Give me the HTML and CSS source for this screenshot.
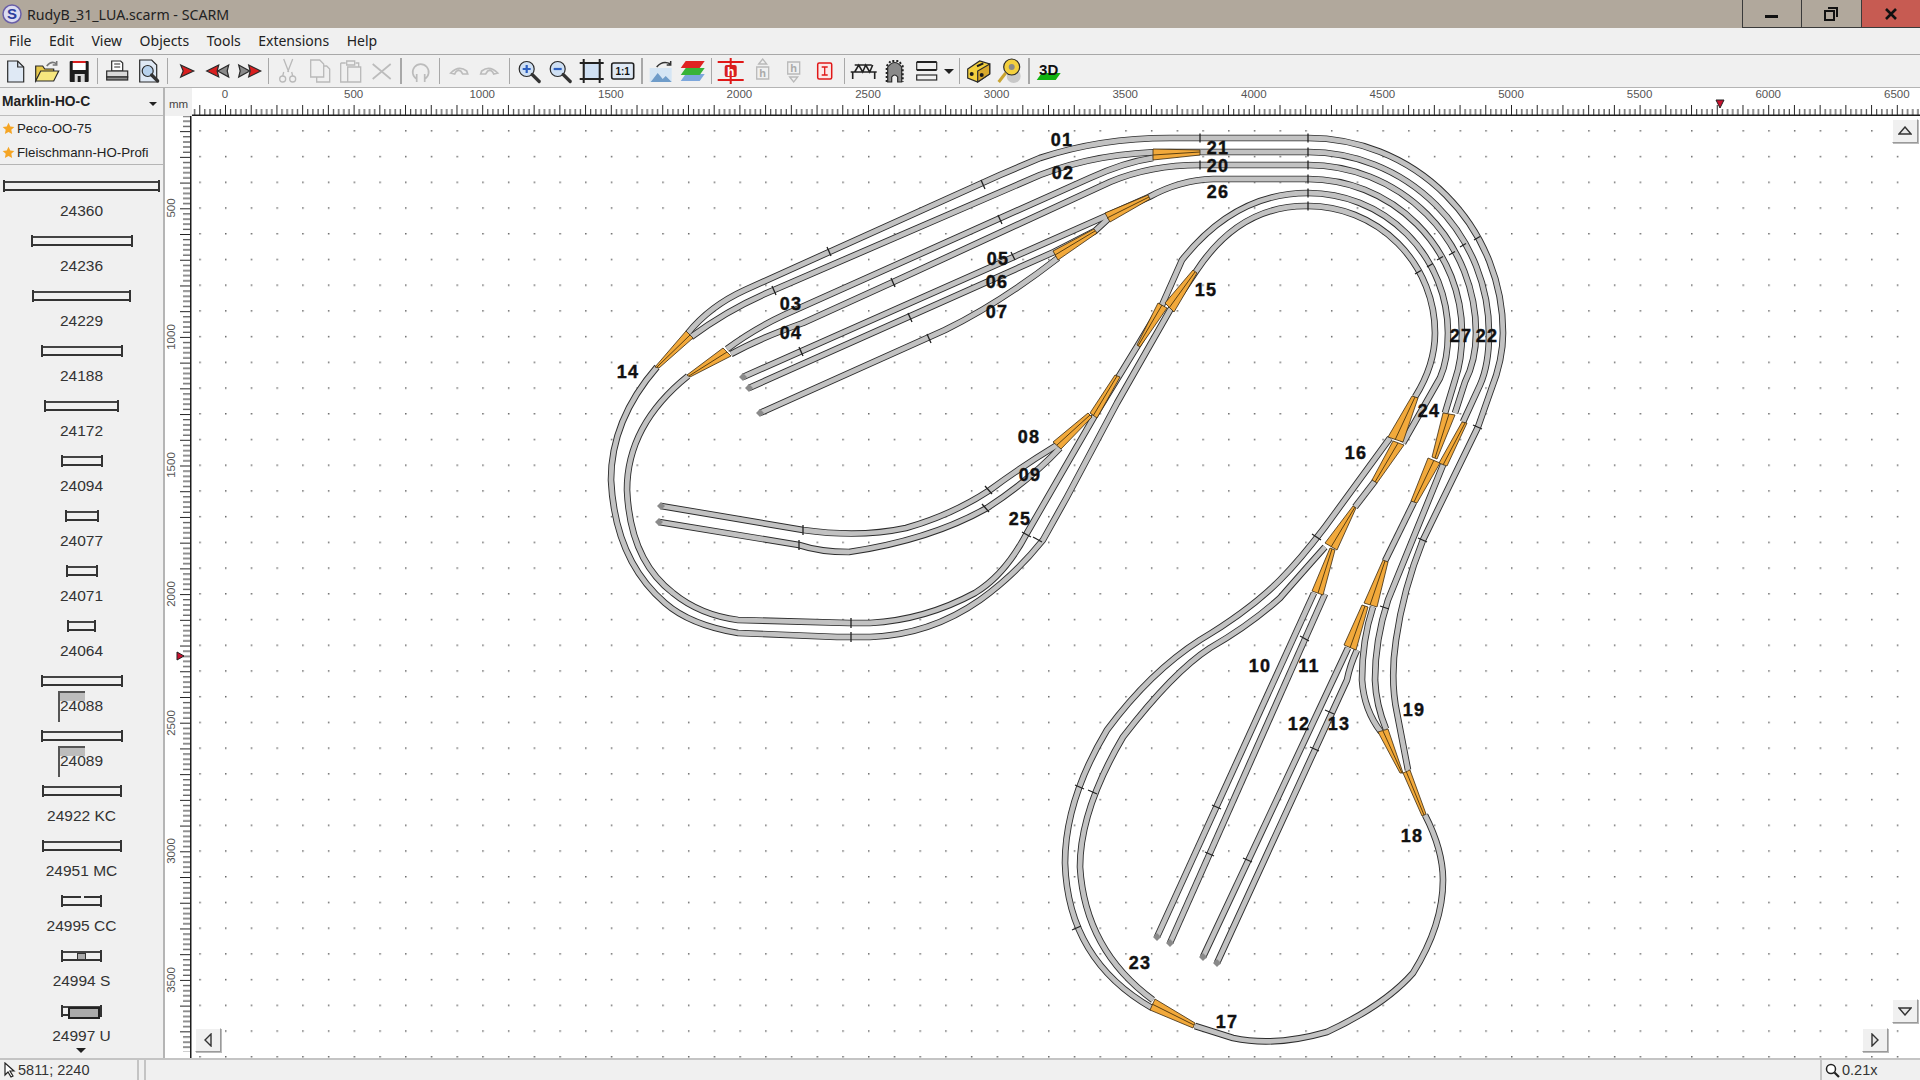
FILE: index.html
```html
<!DOCTYPE html>
<html lang="en">
<head>
<meta charset="utf-8">
<title>RudyB_31_LUA.scarm - SCARM</title>
<link rel="stylesheet" href="styles.css">
</head>
<body>
<div class="app">
  <header class="titlebar">
    <svg class="appicon" viewBox="0 0 20 20"><circle cx="10" cy="10" r="9" class="appicon-bg"/><text x="10" y="15" class="appicon-s">S</text></svg>
    <span class="title">RudyB_31_LUA.scarm - SCARM</span>
    <div class="winbtns">
      <div class="winbtn"><span class="w-min"></span></div>
      <div class="winbtn"><svg width="14" height="14" viewBox="0 0 14 14"><path class="w-res" d="M4 1h9v9M1 4h9v9H1z"/></svg></div>
      <div class="winbtn close"><svg width="14" height="12" viewBox="0 0 14 12"><path class="w-x" d="M2 1l10 10M12 1L2 11"/></svg></div>
    </div>
  </header>
  <nav class="menubar">
    <span>File</span><span>Edit</span><span>View</span><span>Objects</span><span>Tools</span><span>Extensions</span><span>Help</span>
  </nav>
  <div class="toolbar">
    <svg class="ic" viewBox="0 0 26 26"><path class="k pale" d="M5 3h10l6 6v15H5z"/><path class="k none" d="M15 3v6h6"/></svg>
    <svg class="ic" viewBox="0 0 26 26"><path class="k yel" d="M2 23V8h7l2 3h9v3H7z"/><path class="k yel2" d="M2 23l5-10h18l-5 10z"/><path class="garrow" d="M13 8q5-6 10-2m0-3v4h-4"/></svg>
    <svg class="ic" viewBox="0 0 26 26"><rect class="black" x="4" y="3" width="19" height="21" rx="1"/><rect class="redf" x="7" y="3" width="13" height="2"/><rect class="whitef" x="7" y="5" width="13" height="7"/><rect class="lgray" x="9" y="16" width="10" height="8"/><rect class="black" x="12" y="18" width="3" height="6"/></svg>
    <i class="sep"></i>
    <svg class="ic" viewBox="0 0 26 26"><path class="k whitef" d="M8 3h9l2 2v8H8z"/><path class="k none" d="M10.500 6h6M10.500 9h6"/><rect class="k lgray" x="3" y="13" width="21" height="6"/><rect class="k g5" x="3" y="19" width="21" height="3"/></svg>
    <svg class="ic" viewBox="0 0 26 26"><path class="k pale" d="M4 2h12l5 5v17H4z"/><circle class="k lblue" cx="12" cy="13" r="5.500"/><path class="thick" d="M16 17l6 6"/></svg>
    <i class="sep"></i>
    <svg class="ic" viewBox="0 0 26 26"><path class="k redf" d="M7 7l13 6-13 6 2.500-6z"/></svg>
    <svg class="ic" viewBox="0 0 26 26"><path class="k redf" d="M14 7L2 13l12 6-1.500-6z"/><path class="k g5" d="M24 7l-11 6 11 6-1.500-6z"/></svg>
    <svg class="ic" viewBox="0 0 26 26"><path class="k g5" d="M2 7l11 6-11 6 1.500-6z"/><path class="k redf" d="M12 7l12 6-12 6 1.500-6z"/></svg>
    <i class="sep"></i>
    <svg class="ic" viewBox="0 0 26 26"><path class="d" d="M9 1l5 13M18 1l-5 13M9 14l-1 4M17 14l1 4"/><circle class="d" cx="8" cy="21" r="3"/><circle class="d" cx="18" cy="21" r="3"/></svg>
    <svg class="ic" viewBox="0 0 26 26"><path class="d" d="M4 2h9l4 4v13H4zM17 8h3l3 3v13H10v-5"/></svg>
    <svg class="ic" viewBox="0 0 26 26"><path class="d" d="M3 5h5M18 5h3v4M3 5v19h7M10 9h13v15H10zM9 3h8v4H9z"/></svg>
    <svg class="ic" viewBox="0 0 26 26"><path class="d2" d="M4 6l18 15M22 6L4 21"/></svg>
    <i class="sep"></i>
    <svg class="ic" viewBox="0 0 26 26"><path class="d2" d="M9 21a8 8 0 1 1 8 0M9 16v8M17 16v8"/></svg>
    <i class="sep"></i>
    <svg class="ic" viewBox="0 0 26 26"><path class="d2" d="M5 15q8-8 16-2l1 3h-5l-2-3q-4-2-6 3z"/></svg>
    <svg class="ic" viewBox="0 0 26 26"><path class="d2" d="M21 15q-8-8-16-2l-1 3h5l2-3q4-2 6 3z"/></svg>
    <i class="sep"></i>
    <svg class="ic" viewBox="0 0 26 26"><circle class="k lblue2" cx="11" cy="11" r="7.500"/><path class="plus" d="M7 11h8M11 7v8"/><path class="thick" d="M16.500 16.500l7 7"/></svg>
    <svg class="ic" viewBox="0 0 26 26"><circle class="k lblue2" cx="11" cy="11" r="7.500"/><path class="plus" d="M7 11h8"/><path class="thick" d="M16.500 16.500l7 7"/></svg>
    <svg class="ic" viewBox="0 0 26 26"><rect class="k lblue2" x="5" y="5" width="16" height="16"/><path class="thick2" d="M5 1v24M21 1v24M1 5h24M1 21h24"/></svg>
    <svg class="ic" viewBox="0 0 26 26"><rect class="k2 pale" x="2" y="5" width="22" height="16" rx="2"/><text x="13" y="17" class="oneone">1:1</text></svg>
    <i class="sep"></i>
    <svg class="ic" viewBox="0 0 26 26"><rect class="lblue3" x="2" y="10" width="22" height="14"/><path class="blue" d="M3 24l7-9 5 6 3-3 6 6z"/><path class="garrow2" d="M9 9q6-7 14-3m0-3v4h-4"/></svg>
    <svg class="ic" viewBox="0 0 26 26"><path class="lay3" d="M6 16h19l-5 7H1z"/><path class="lay2" d="M6 10h19l-5 7H1z"/><path class="lay1" d="M6 3h19l-5 7H1z"/></svg>
    <i class="sep"></i>
    <svg class="ic" viewBox="0 0 26 26"><path class="rl" d="M0 4h26M0 22h26M13 0v26"/><rect class="redf" x="7" y="7" width="12" height="12" rx="2"/><text x="13" y="17.500" class="hw">h</text></svg>
    <svg class="ic" viewBox="0 0 26 26"><path class="d" d="M9 6l4-5 4 5zM7 9h12v12H7z"/><text x="13" y="19" class="hg">h</text></svg>
    <svg class="ic" viewBox="0 0 26 26"><path class="d" d="M7 4h12v12H7zM9 19l4 5 4-5z"/><text x="13" y="14" class="hg">h</text></svg>
    <svg class="ic" viewBox="0 0 26 26"><rect class="rbox" x="6" y="5" width="14" height="16" rx="1.500"/><path class="rl thin" d="M10 9h6M13 9v8M10 17h6"/></svg>
    <i class="sep"></i>
    <svg class="ic" viewBox="0 0 26 26"><path class="k2 none" d="M0 14h26M2 14v7M24 14v7M4 14l4-7 4 7 3-7 4 7 3-7M4 7h17"/></svg>
    <svg class="ic" viewBox="0 0 26 26"><path class="g5 k" d="M6 24V9q7-9 14 0v15h-4v-5q-3-4-6 0v5z"/><path class="dots" d="M5 24V8l4-5h8l4 5v16"/></svg>
    <svg class="ic" viewBox="0 0 26 26"><path class="thick2" d="M3 4h20M3 12h20"/><rect class="k none" x="3" y="17" width="20" height="5"/><path class="k none" d="M3 4v8M23 4v8"/></svg>
    <i class="ddarrow"></i>
    <i class="sep"></i>
    <svg class="ic" viewBox="0 0 26 26"><path class="k yel3" d="M2 11l12-8 10 3v10L12 24 2 20z"/><path class="k yel4" d="M12 13v11l12-8V6z"/><rect class="black" x="11" y="6" width="7" height="2" transform="rotate(-25 14 7)"/><circle class="black" cx="6" cy="16" r="2"/><circle class="black" cx="16" cy="17" r="2"/></svg>
    <svg class="ic" viewBox="0 0 26 26"><circle class="tapeshadow" cx="17" cy="18" r="7"/><circle class="k yel3" cx="15" cy="9" r="8"/><circle class="g5" cx="15" cy="9" r="3"/><path class="tape" d="M9 15L2 24"/></svg>
    <i class="sep"></i>
    <svg class="ic" viewBox="0 0 26 26"><path class="green" d="M6 15h19l-5 7H1z"/><text x="13" y="17" class="threed">3D</text></svg>
  </div>

  <main class="main">
    <aside class="panel">
      <div class="combo"><b>Marklin-HO-C</b><i class="ddarrow small"></i></div>
      <div class="fav"><svg class="star" viewBox="0 0 20 20"><path d="M10 1l2.700 6 6.300.7-4.700 4.300 1.300 6.500L10 15.300 4.400 18.500 5.700 12 1 7.700 7.300 7z"/></svg>Peco-OO-75</div>
      <div class="fav last"><svg class="star" viewBox="0 0 20 20"><path d="M10 1l2.700 6 6.300.7-4.700 4.300 1.300 6.500L10 15.300 4.400 18.500 5.700 12 1 7.700 7.300 7z"/></svg>Fleischmann-HO-Profi</div>
      <div class="list">
        <div class="item"><div class="sym" style="width:157px"></div><span>24360</span></div>
        <div class="item"><div class="sym" style="width:102px"></div><span>24236</span></div>
        <div class="item"><div class="sym" style="width:99px"></div><span>24229</span></div>
        <div class="item"><div class="sym" style="width:82px"></div><span>24188</span></div>
        <div class="item"><div class="sym" style="width:75px"></div><span>24172</span></div>
        <div class="item"><div class="sym" style="width:42px"></div><span>24094</span></div>
        <div class="item"><div class="sym" style="width:34px"></div><span>24077</span></div>
        <div class="item"><div class="sym" style="width:32px"></div><span>24071</span></div>
        <div class="item"><div class="sym" style="width:29px"></div><span>24064</span></div>
        <div class="item tapered"><div class="sym" style="width:82px"></div><span>24088</span></div>
        <div class="item tapered"><div class="sym" style="width:82px"></div><span>24089</span></div>
        <div class="item"><div class="sym" style="width:80px"></div><span>24922 KC</span></div>
        <div class="item"><div class="sym" style="width:80px"></div><span>24951 MC</span></div>
        <div class="item"><div class="sym gap" style="width:41px"></div><span>24995 CC</span></div>
        <div class="item"><div class="sym box" style="width:41px"></div><span>24994 S</span></div>
        <div class="item"><div class="sym ubox" style="width:41px"></div><span>24997 U</span></div>
      </div>
      <i class="more"></i>
    </aside>

    <section class="work">
      <div class="corner">mm</div>
      <svg class="hruler" viewBox="192 88 1728 28">
        <defs>
          <pattern id="hticks" patternUnits="userSpaceOnUse" x="225" y="88" width="25.72" height="28">
            <path class="tick" d="M.5 17v10M5.640 21v6M10.790 21v6M15.930 21v6M21.080 21v6"/>
          </pattern>
        </defs>
        <rect x="192" y="88" width="1728" height="28" fill="url(#hticks)"/>
        <rect class="black" x="192" y="114.500" width="1728" height="1.500"/>
        <g class="rtext">
          <text x="225" y="98">0</text><text x="353.600" y="98">500</text><text x="482.200" y="98">1000</text><text x="610.800" y="98">1500</text><text x="739.400" y="98">2000</text><text x="868" y="98">2500</text><text x="996.600" y="98">3000</text><text x="1125.200" y="98">3500</text><text x="1253.800" y="98">4000</text><text x="1382.400" y="98">4500</text><text x="1511" y="98">5000</text><text x="1639.600" y="98">5500</text><text x="1768.200" y="98">6000</text><text x="1896.800" y="98">6500</text>
        </g>
        <path class="marker" d="M1716 100h8l-4 8z"/>
      </svg>
      <svg class="vruler" viewBox="165 116 27 942">
        <defs>
          <pattern id="vticks" patternUnits="userSpaceOnUse" x="165" y="79.700" width="27" height="25.720">
            <path class="tick" d="M15 .5h10M18 5.640h7M18 10.790h7M18 15.930h7M18 21.080h7"/>
          </pattern>
        </defs>
        <rect x="165" y="116" width="27" height="936" fill="url(#vticks)"/>
        <rect class="black" x="190" y="116" width="1.500" height="942"/>
        <g class="rtext">
          <text transform="translate(175 208) rotate(-90)">500</text><text transform="translate(175 337) rotate(-90)">1000</text><text transform="translate(175 465) rotate(-90)">1500</text><text transform="translate(175 594) rotate(-90)">2000</text><text transform="translate(175 723) rotate(-90)">2500</text><text transform="translate(175 851) rotate(-90)">3000</text><text transform="translate(175 980) rotate(-90)">3500</text>
        </g>
        <path class="marker" d="M177 652v8l7-4z"/>
      </svg>
      <div class="canvas">
        <svg class="plan" viewBox="192 116 1728 942">
          <defs>
            <pattern id="dots" patternUnits="userSpaceOnUse" x="19.240" y="1.500" width="25.720" height="25.720">
              <rect class="griddot" x="0" y="0" width="1.500" height="1.500"/>
            </pattern>
            <g id="tracks">
              <path d="M1308 138A195 195 0 0 1 1503 333Q1503 360 1491 390L1478 427 1423 540Q1403 590 1396 640 1390 680 1397 713L1408 770"/>
              <path d="M1308 152A181 181 0 0 1 1489 333Q1489 365 1480 385L1463 422"/>
              <path d="M1308 165A168 168 0 0 1 1476 333Q1476 360 1465 382L1455 413"/>
              <path d="M1308 179A154 154 0 0 1 1462 333Q1462 360 1455 380L1445 413"/>
              <path d="M1308 193A140 140 0 0 1 1448 333Q1448 360 1440 378L1403 443"/>
              <path d="M1308 206A127 127 0 0 1 1435 333Q1435 365 1415 397"/>
              <path d="M1308 138H1170Q1100 138 1040 158L1000 175 745 290Q710 306 688 333"/>
              <path d="M1308 152H1170Q1100 152 1040 175L774 290Q730 308 691 337"/>
              <path d="M1153 158Q1125 162 1090 178L784 315Q752 330 727 349"/>
              <path d="M1308 165H1200Q1150 165 1110 182L891 283 803 323Q760 338 731 354"/>
              <path d="M1308 179H1213Q1180 180 1149 197L743 377"/>
              <path d="M1108 219L1095 231 1054 252 749 388"/>
              <path d="M1058 258Q1000 303 945 330L760 413"/>
              <path d="M657 367Q611 420 611 480 615 560 665 603 690 625 738 633L837 637H870Q930 635 980 600 1015 575 1043 540L1067 497 1117 403 1170 310 1197 270Q1240 205 1308 206"/>
              <path d="M688 376Q627 425 627 490 630 560 673 593 700 615 738 620L849 623H870Q925 620 975 593 1005 575 1027 533L1094 417 1138 345 1162 305 1182 260Q1235 193 1308 193"/>
              <path d="M1057 445Q1021 467 990 490 952 515 906 528 860 538 803 530L661 506"/>
              <path d="M1060 448Q1030 480 987 508 930 540 849 552 820 552 799 545L659 522"/>
              <path d="M1390 438L1325 527Q1300 560 1280 580 1250 610 1200 640 1150 672 1107 730 1065 800 1065 863 1068 960 1152 1008"/>
              <path d="M1355 507L1375 481"/>
              <path d="M1325 547Q1300 575 1280 598 1250 625 1210 648 1173 672 1123 737 1080 810 1080 867 1085 950 1153 1000"/>
              <path d="M1314 593L1157 937"/>
              <path d="M1325 594L1170 943"/>
              <path d="M1348 648L1203 957"/>
              <path d="M1357 650Q1350 665 1347 680L1217 963"/>
              <path d="M1385 561L1414 502"/>
              <path d="M1373 607Q1362 640 1362 680 1364 710 1381 732"/>
              <path d="M1443 465L1388 600Q1375 640 1375 680 1376 705 1386 729"/>
              <path d="M1425 815Q1443 850 1443 880 1443 925 1413 973 1385 1005 1327 1032 1275 1047 1233 1038L1195 1026"/>
            </g>
          </defs>
          <rect x="192" y="116" width="1728" height="942" fill="url(#dots)"/>
          <use href="#tracks" class="edge"/>
          <use href="#tracks" class="bed"/>
          <path class="joints" d="M1308 133.500v9M1308 147.500v9M1308 160.500v9M1308 174.500v9M1308 188.500v9M1308 201.500v9M1200 133.500v9M1200 160.500v9M1474 240l6-3.500M1460 247l6-3.500M1449 255l6-3.500M1437 260l6-3.500M1427 267l6-3.500M1415 274l6-3.500M981 180l4 9M998 215l4 9M827 247l4 9M891 278l4 9M772 286l4 9M799 347l4 9M908 313l4 9M927 334l4 9M851 632v10M851 618v10M803 525v10M799 540v10M985 486l7 8M982 504l7 8M1022 532l9 5M1033 537l9 5M1312 534l9 6M1473 425l9 4M1418 538l9 4M1380 606l9 3M1300 636l9 5M1075 785l9 4M1088 790l9 4M1212 805l9 4M1205 852l9 4M1310 747l9 4M1243 858l9 4M1325 710l9 4M1072 930l9-4M1011 252l4 8"/>
          <g class="wedges">
            <polygon points="1412,396 1418,398 1403,442 1388,437"/>
            <polygon points="1393,441 1404,445 1377,483 1372,480"/>
            <polygon points="1353,506 1356,508 1337,550 1325,543"/>
            <polygon points="1330,548 1335,550 1323,595 1312,591"/>
            <polygon points="1443,413 1455,415 1437,459 1432,457"/>
            <polygon points="1462,422 1467,423 1447,466 1439,463"/>
            <polygon points="1428,458 1440,463 1417,503 1411,501"/>
            <polygon points="1383,560 1388,562 1377,607 1364,603"/>
            <polygon points="1362,605 1368,607 1356,650 1344,645"/>
            <polygon points="1200,150 1200,155 1153,160 1153,149"/>
            <polygon points="1148,195 1150,199 1110,222 1105,213"/>
            <polygon points="1094,229 1097,233 1058,260 1053,251"/>
            <polygon points="1193,270 1197,273 1174,312 1165,303"/>
            <polygon points="1158,303 1167,308 1140,347 1137,345"/>
            <polygon points="686,331 693,338 659,368 655,367"/>
            <polygon points="723,348 731,356 690,377 687,375"/>
            <polygon points="1115,375 1120,377 1097,418 1090,413"/>
            <polygon points="1088,413 1092,417 1061,449 1053,442"/>
            <polygon points="1378,732 1388,729 1403,773 1400,773"/>
            <polygon points="1403,773 1410,770 1426,814 1422,816"/>
            <polygon points="1155,999 1150,1010 1193,1028 1195,1023"/>
          </g>
          <path class="wlines" d="M1415 397L1395 440M1398 443L1375 482M1355 507L1331 547M1332 549L1318 593M1449 414L1435 458M1465 423L1443 465M1434 460L1414 502M1385 561L1370 605M1365 606L1350 648M1200 152L1153 155M1149 197L1107 218M1095 231L1055 255M1195 272L1169 308M1162 305L1138 346M657 367L690 335M689 376L727 352M1117 376L1093 416M1090 415L1057 445M1383 731L1402 773M1406 771L1424 815M1194 1025L1152 1004"/>
          <path class="stubs" d="M743 377m-4 0l4-4 4 4-4 4zM749 388m-4 0l4-4 4 4-4 4zM760 413m-4 0l4-4 4 4-4 4zM661 506m-4 0l4-4 4 4-4 4zM659 522m-4 0l4-4 4 4-4 4zM1157 937m-4 0l4-4 4 4-4 4zM1170 943m-4 0l4-4 4 4-4 4zM1203 957m-4 0l4-4 4 4-4 4zM1217 963m-4 0l4-4 4 4-4 4z"/>
          <g class="lbl">
            <text x="1062" y="146">01</text><text x="1218" y="154">21</text><text x="1218" y="172">20</text><text x="1063" y="179">02</text><text x="1218" y="198">26</text>
            <text x="998" y="265">05</text><text x="997" y="288">06</text><text x="997" y="318">07</text><text x="1206" y="296">15</text>
            <text x="791" y="310">03</text><text x="791" y="339">04</text><text x="628" y="378">14</text>
            <text x="1461" y="342">27</text><text x="1487" y="342">22</text><text x="1429" y="417">24</text><text x="1356" y="459">16</text>
            <text x="1029" y="443">08</text><text x="1030" y="481">09</text><text x="1020" y="525">25</text>
            <text x="1260" y="672">10</text><text x="1309" y="672">11</text><text x="1299" y="730">12</text><text x="1339" y="730">13</text>
            <text x="1414" y="716">19</text><text x="1412" y="842">18</text><text x="1140" y="969">23</text><text x="1227" y="1028">17</text>
          </g>
        </svg>
        <div class="sbtn up"><svg width="14" height="10" viewBox="0 0 14 10"><path class="tri" d="M7 1l6 7H1z"/></svg></div>
        <div class="sbtn down"><svg width="14" height="10" viewBox="0 0 14 10"><path class="tri" d="M1 2h12L7 9z"/></svg></div>
        <div class="sbtn left"><svg width="10" height="14" viewBox="0 0 10 14"><path class="tri" d="M8 1v12L2 7z"/></svg></div>
        <div class="sbtn right"><svg width="10" height="14" viewBox="0 0 10 14"><path class="tri" d="M2 1v12l6-6z"/></svg></div>
      </div>
    </section>
  </main>

  <footer class="status">
    <div class="pane pos"><svg width="12" height="16" viewBox="0 0 12 16"><path class="cursor" d="M1 1v12l3-3 3 5 2-1-3-5h4z"/></svg>5811; 2240</div>
    <div class="pane mid"></div>
    <div class="pane zoom"><svg width="15" height="15" viewBox="0 0 15 15"><circle class="mag" cx="6" cy="6" r="4.500"/><path class="magh" d="M9.500 9.500l4.500 4.500"/></svg>0.21x</div>
  </footer>
</div>
</body>
</html>
```

FILE: styles.css
```css
* { box-sizing: border-box; }
html, body { margin: 0; padding: 0; height: 100%; overflow: hidden; }
body { font-family: "Liberation Sans", Arial, sans-serif; color: #222; background: #f0f0f0; }
.app { width: 1920px; height: 1080px; display: flex; flex-direction: column; }

/* Title bar */
.titlebar { height: 28px; flex: none; display: flex; align-items: center; background: #b1a89c; padding-left: 2px; }
.appicon { width: 20px; height: 20px; flex: none; }
.appicon-bg { fill: #dcdcf0; stroke: #6a5fa8; stroke-width: 1.5; }
.appicon-s { font: bold 15px "Liberation Sans", sans-serif; fill: #2d3f9e; text-anchor: middle; }
.title { margin-left: 5px; font: 14.2px "Noto Sans", sans-serif; color: #222; white-space: nowrap; }
.winbtns { margin-left: auto; display: flex; height: 28px; }
.winbtn { width: 59.500px; height: 28px; display: flex; align-items: center; justify-content: center; border-left: 1px solid #3a3a3a; border-bottom: 1px solid #3a3a3a; }
.winbtn.close { background: #c75b52; }
.w-min { width: 13px; height: 3px; background: #111; margin-top: 6px; }
.w-res { fill: none; stroke: #111; stroke-width: 2; }
.w-x { fill: none; stroke: #111; stroke-width: 2.6; }

/* Menu */
.menubar { height: 27px; flex: none; display: flex; align-items: center; gap: 17.500px; padding: 0 0 1px 9px; background: #f0f0f0; border-bottom: 1px solid #a8a8a8; font: 14px "Noto Sans", sans-serif; color: #222; }

/* Toolbar */
.toolbar { height: 33px; flex: none; display: flex; align-items: center; background: #f0f0f0; border-bottom: 1px solid #b4b4b4; }
.ic { width: 31.400px; height: 26px; flex: none; }
.sep { width: 7px; height: 26px; flex: none; position: relative; display: block; }
.sep::before { content: ""; display: block; width: 1.500px; height: 26px; margin: 0 auto; background: #a8a8a8; }
.ddarrow { width: 14px; flex: none; height: 0; display: block; position: relative; }
.ddarrow::before { content: ""; position: absolute; left: 2px; top: -2px; border: 5px solid transparent; border-top-color: #222; border-bottom: 0; }
.k { stroke: #2a2a2a; stroke-width: 1.200; }
.k2 { stroke: #222; stroke-width: 1.600; }
.none { fill: none; }
.pale { fill: #dfe9f5; }
.yel { fill: #e8c94a; }
.yel2 { fill: #f6e67e; }
.yel3 { fill: #f3d03e; }
.yel4 { fill: #d9a92c; }
.black { fill: #1c1c1c; }
.redf { fill: #d91f1f; }
.whitef { fill: #fff; }
.lgray { fill: #d8d8d8; }
.g5 { fill: #8a8a8a; }
.lblue { fill: #b7d2ee; }
.lblue2 { fill: #cfe0f4; }
.lblue3 { fill: #d5e5f4; }
.blue { fill: #6f9cc9; }
.green { fill: #12b312; }
.garrow { fill: none; stroke: #777; stroke-width: 1.600; }
.garrow2 { fill: none; stroke: #333; stroke-width: 1.500; }
.thick { fill: none; stroke: #333; stroke-width: 3.200; stroke-linecap: round; }
.thick2 { fill: none; stroke: #222; stroke-width: 2; }
.plus { fill: none; stroke: #2d5fc0; stroke-width: 2.200; }
.d { fill: none; stroke: #b9b9b9; stroke-width: 1.300; }
.d2 { fill: none; stroke: #bcbcbc; stroke-width: 1.700; }
.oneone { font: bold 10px "Liberation Sans", sans-serif; fill: #111; text-anchor: middle; }
.lay1 { fill: #e02222; }
.lay2 { fill: #37b337; }
.lay3 { fill: #7da7dc; }
.rl { fill: none; stroke: #e01818; stroke-width: 2; }
.rl.thin { stroke-width: 1.300; }
.rbox { fill: #fbe9e9; stroke: #e01818; stroke-width: 1.500; }
.hw { font: bold 12px "Liberation Sans", sans-serif; fill: #fff; text-anchor: middle; }
.hg { font: bold 11px "Liberation Sans", sans-serif; fill: #aaa; text-anchor: middle; }
.dots { fill: none; stroke: #222; stroke-width: 2; stroke-dasharray: 2 2; }
.tape { fill: none; stroke: #c9a431; stroke-width: 3; }
.tapeshadow { fill: #c8c8c8; }
.threed { font: bold 15px "Liberation Sans", sans-serif; fill: #111; text-anchor: middle; }

/* Main split */
.main { flex: 1; min-height: 0; display: flex; }

/* Left panel */
.panel { width: 165px; flex: none; display: flex; flex-direction: column; overflow: hidden; background: #f0f0f0; border-right: 2px solid #b5b5b5; }
.combo { height: 28px; flex: none; display: flex; align-items: center; padding-left: 2px; font-size: 13.800px; color: #222; border-bottom: 1px solid #bcbcbc; }
.combo b { flex: 1; }
.ddarrow.small { width: 14px; }
.ddarrow.small::before { left: 0; top: 0; border-width: 4px; border-bottom: 0; }
.fav { height: 25px; flex: none; display: flex; align-items: center; gap: 2px; padding-left: 2px; font-size: 13.300px; color: #222; white-space: nowrap; }
.fav.last { border-bottom: 1px solid #b5b5b5; height: 24px; }
.star { width: 13px; height: 13px; flex: none; fill: #f5a524; }
.list { flex: none; }
.item { height: 55px; position: relative; display: flex; flex-direction: column; align-items: center; padding-top: 15px; }
.item span { margin-top: 10px; font-size: 15.500px; line-height: 18px; color: #333; white-space: nowrap; position: relative; }
.sym { height: 12px; flex: none; position: relative; border-left: 2px solid #333; border-right: 2px solid #333;
  background: linear-gradient(#444, #444) 0 1px / 100% 2px no-repeat, linear-gradient(#333, #333) 0 9px / 100% 2px no-repeat; }
.tapered .sym::after { content: ""; position: absolute; left: 15px; top: 16px; width: 25px; height: 29px; border-left: 2px solid #555; border-top: 2px solid #555;
  background: linear-gradient(#bdbdbd, #bdbdbd) 0 0 / 100% 8px no-repeat; }
.sym.gap { background: linear-gradient(to right, #333 0 48%, transparent 48% 58%, #333 58%) 0 1px / 100% 2px no-repeat, linear-gradient(#333, #333) 0 9px / 100% 2px no-repeat; }
.sym.box::after { content: ""; position: absolute; left: 14px; top: 3px; width: 7px; height: 5px; border: 1.500px solid #333; background: #aaa; }
.sym.ubox::after { content: ""; position: absolute; left: 5px; top: 2px; width: 28px; height: 8px; border: 2px solid #222; background: #aaa; }
.more { display: block; width: 0; height: 0; margin: 3px 0 0 76px; border: 5px solid transparent; border-top-color: #222; border-bottom: 0; }

/* Work area with rulers */
.work { flex: 1; min-width: 0; display: grid; grid-template-columns: 27px 1fr; grid-template-rows: 28px 1fr; }
.corner { display: flex; align-items: center; justify-content: center; font-size: 11.500px; color: #444; padding-top: 4px; background: #f0f0f0; }
.hruler { width: 1728px; height: 28px; display: block; background: #fff; }
.vruler { width: 27px; height: 942px; display: block; background: #fff; }
.tick { fill: none; stroke: #222; stroke-width: 1; }
.rtext { font: 11.500px "Liberation Sans", sans-serif; fill: #555; text-anchor: middle; }
.marker { fill: #c8102e; stroke: #222; stroke-width: 1; }
.canvas { position: relative; background: #fff; overflow: hidden; }
.plan { width: 1728px; height: 942px; display: block; }
.griddot { fill: #666; }
.edge { fill: none; stroke: #2c2c2c; stroke-width: 6.600; stroke-linejoin: round; }
.bed { fill: none; stroke: #c2c2c2; stroke-width: 4.800; stroke-linejoin: round; }
.joints { fill: none; stroke: #222; stroke-width: 1.300; }
.wedges polygon { fill: #f2a93b; stroke: #3a2a10; stroke-width: .8; }
.wlines { fill: none; stroke: #5b3f10; stroke-width: 1; }
.stubs { fill: #8a8a8a; }
.lbl { font: bold 18px "Liberation Sans", sans-serif; letter-spacing: 1.300px; fill: #111; stroke: #111; stroke-width: .4; text-anchor: middle; }

/* Scroll buttons over the canvas */
.sbtn { position: absolute; width: 26px; height: 24px; display: flex; align-items: center; justify-content: center; background: #f0f0f0; border: 1px solid; border-color: #fff #9a9a9a #9a9a9a #fff; box-shadow: 1px 1px 0 #bbb; }
.sbtn.up { right: 2px; top: 3px; }
.sbtn.down { right: 2px; bottom: 35px; }
.sbtn.left { left: 3px; bottom: 6px; }
.sbtn.right { right: 32px; bottom: 6px; }
.tri { fill: #e6e6e6; stroke: #333; stroke-width: 1.400; }

/* Status bar */
.status { height: 22px; flex: none; display: flex; gap: 5px; align-items: stretch; background: #f0f0f0; border-top: 2px solid #c4c4c4; font-size: 14.500px; color: #333; }
.pane { display: flex; align-items: center; gap: 2px; border-left: 2px solid #c4c4c4; }
.pos { width: 139px; border-left: 0; padding-left: 4px; border-right: 2px solid #c4c4c4; }
.mid { flex: 1; }
.zoom { width: 100px; padding-left: 3px; gap: 2px; }
.cursor { fill: #fff; stroke: #222; stroke-width: 1.200; }
.mag { fill: #fff; stroke: #222; stroke-width: 1.500; }
.magh { fill: none; stroke: #222; stroke-width: 2.200; }
```
